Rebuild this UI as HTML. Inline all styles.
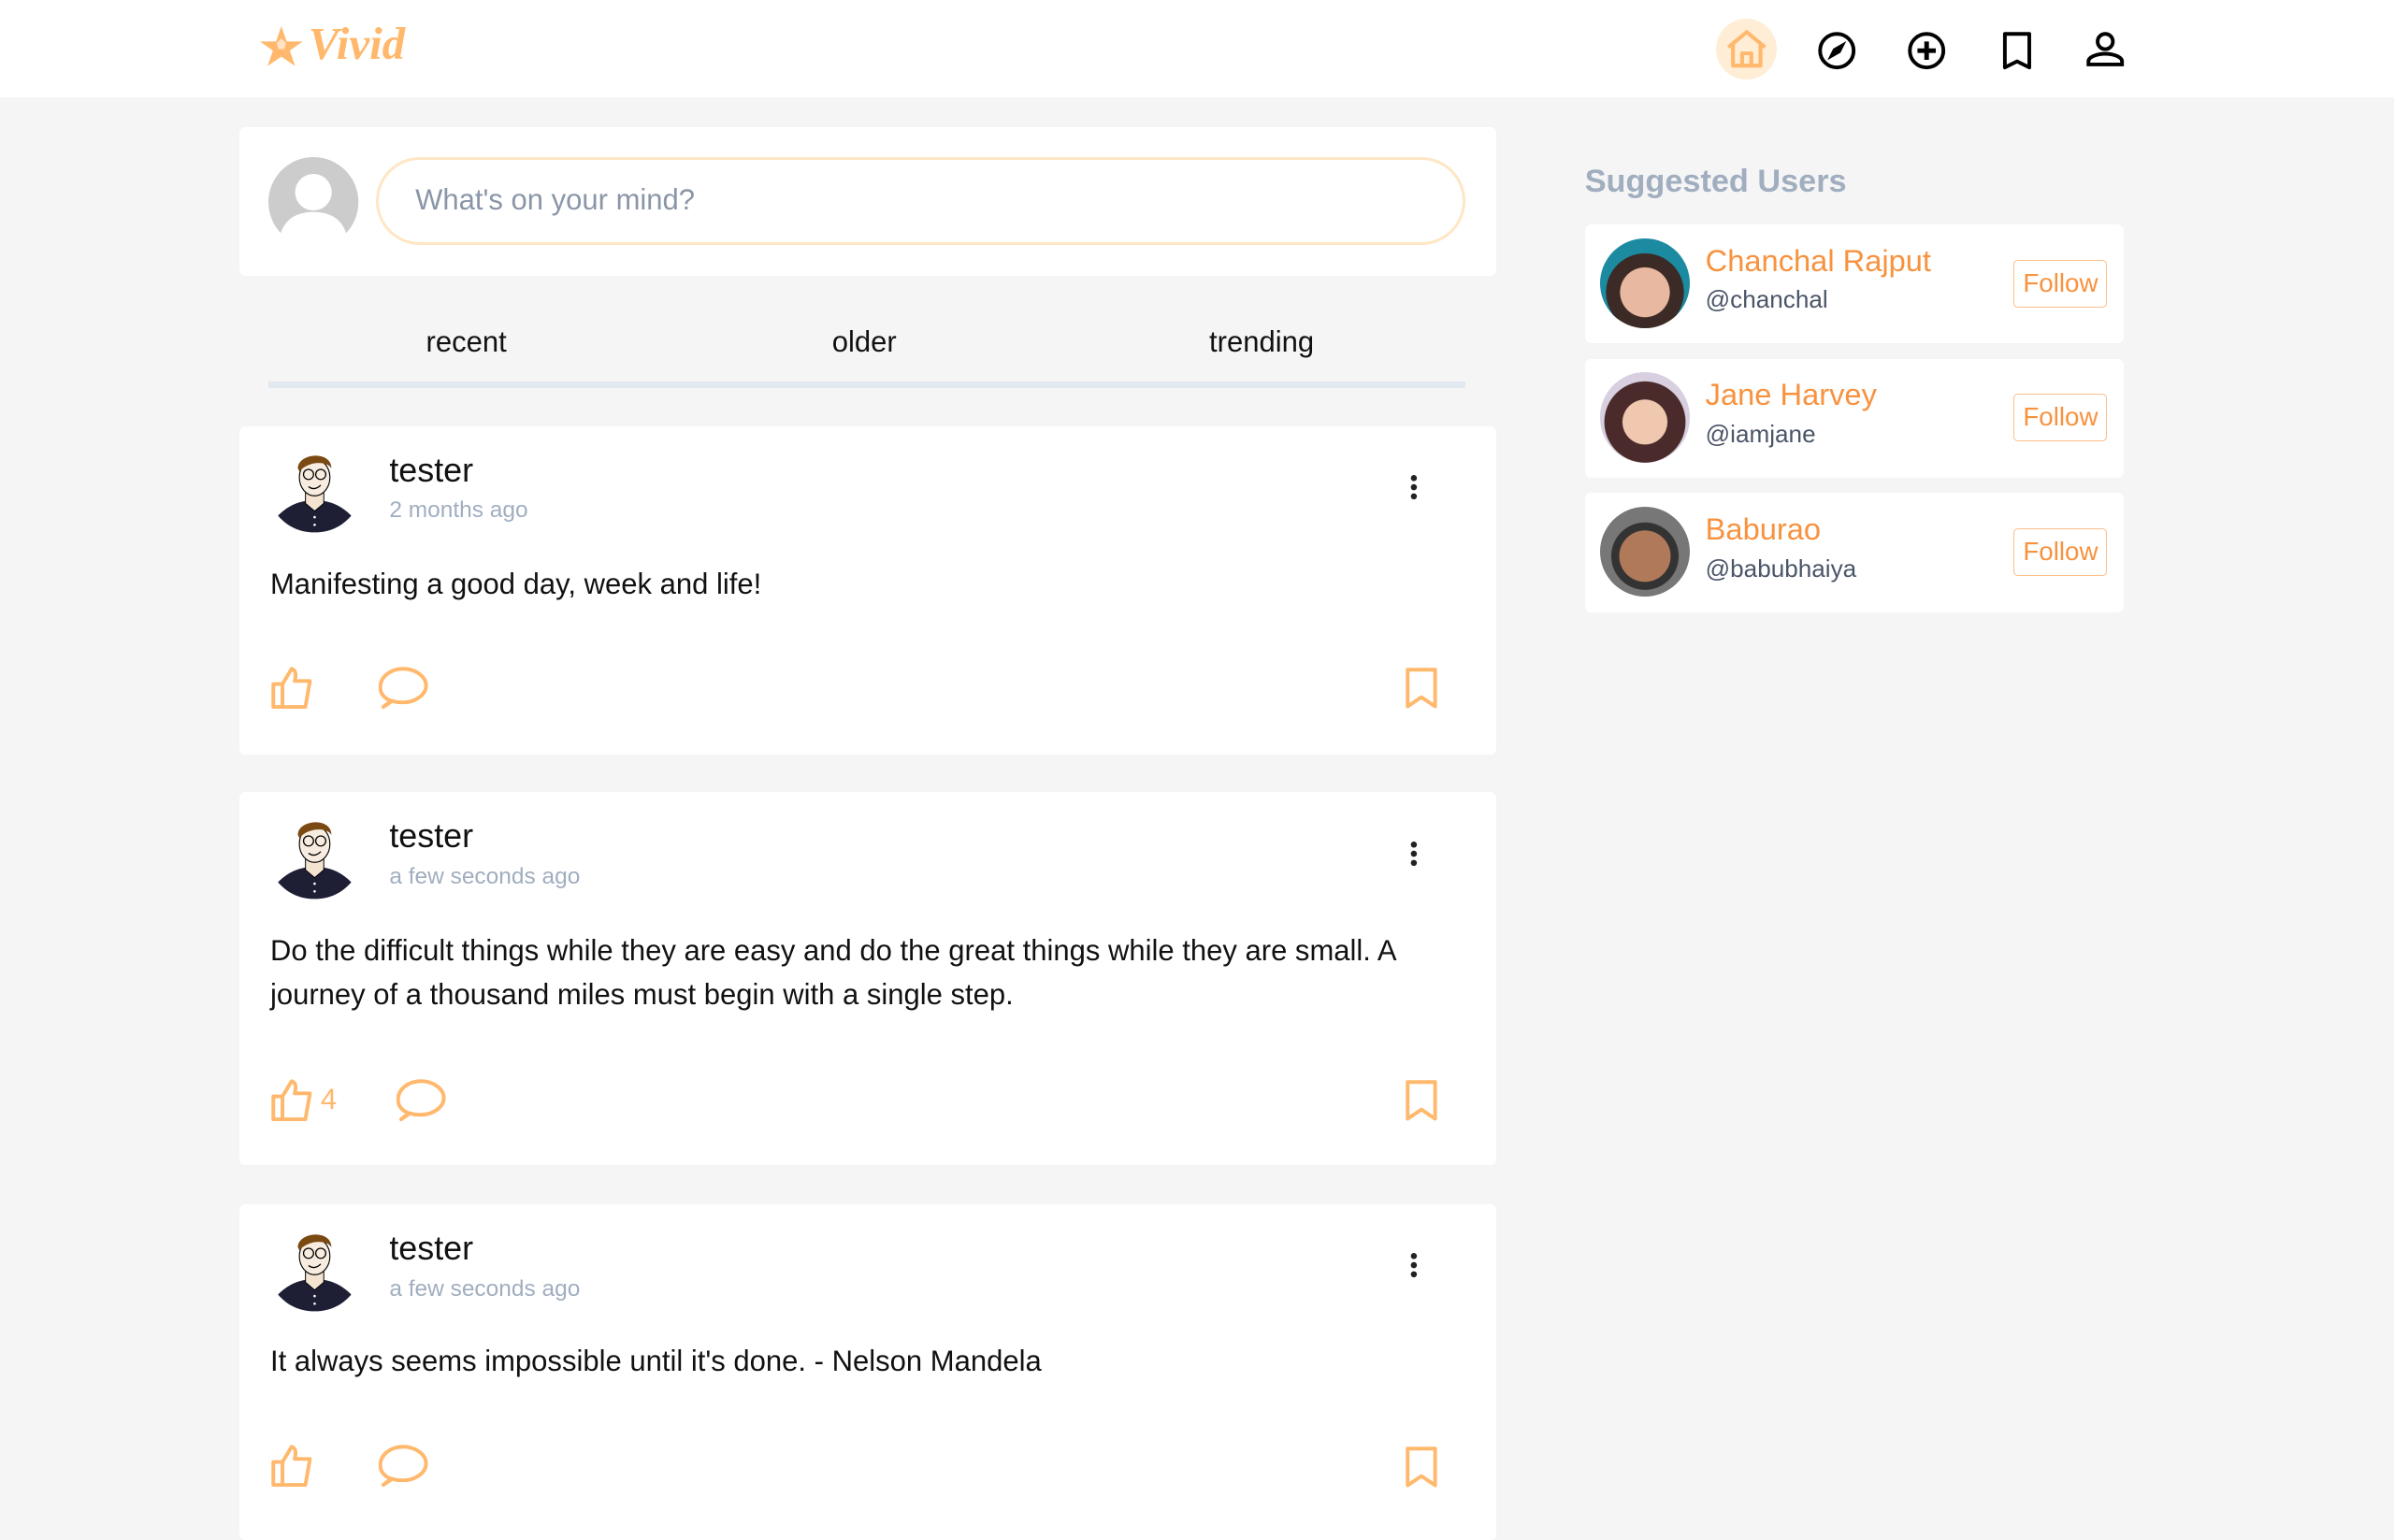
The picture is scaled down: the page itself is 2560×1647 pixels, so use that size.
<!DOCTYPE html>
<html><head><meta charset="utf-8"><style>
html,body{margin:0;padding:0;}
body{width:1568px;height:980px;zoom:1.63265;background:#f5f5f5;font-family:"Liberation Sans",sans-serif;position:relative;overflow:hidden;color:#111;}
.abs{position:absolute;}
.hdr{left:0;top:0;width:1568px;height:64px;background:#fff;}
.card{background:#fff;border-radius:4px;}
.name{font-size:22px;}
.time{font-size:15px;color:#a0aec0;}
.txt{font-size:19px;line-height:29px;}
.sug{left:1038px;width:353px;height:78px;background:#fff;border-radius:4px;}
.sug .av{position:absolute;left:10px;top:9px;width:59px;height:59px;border-radius:50%;}
.sug .n{position:absolute;left:79px;top:12px;font-size:20px;color:#f7923f;}
.sug .h{position:absolute;left:79px;top:40px;font-size:16px;color:#4a5568;}
.sug .f{position:absolute;left:281px;top:23px;width:60px;height:30px;border:1px solid #fbbf8a;border-radius:3px;color:#f7923f;font-size:17px;text-align:center;line-height:30px;}
</style></head><body>
<div class="abs hdr"></div>
<svg class="abs" style="left:170px;top:17px" width="28" height="27" viewBox="0 0 28 27"><polygon points="14,0 17.5,10 28,10 19.5,16 23,26 14,20 5,26 8.5,16 0,10 10.5,10" fill="#ffb86c"/><polygon points="14,8 17,11 16,15 12,15 11,11" fill="#fff" opacity=".6"/></svg>
<div class="abs" style="left:202px;top:11px;font-family:'Liberation Serif',serif;font-style:italic;font-weight:bold;font-size:30px;color:#ffb86c;">Vivid</div>
<div class="abs" style="left:1124px;top:12px;width:40px;height:40px;border-radius:50%;background:#ffedd5"></div>
<svg class="abs" style="left:1130px;top:19px" width="28" height="26" viewBox="0 0 28 26" fill="none" stroke="#ffb86c" stroke-width="2.5" stroke-linejoin="round"><path d="M2 12 L14 2 L26 12"/><path d="M5 10 V24 H23 V10"/><path d="M11 24 V16 H17 V24"/></svg>
<svg class="abs" style="left:1190px;top:20px" width="26" height="26" viewBox="0 0 26 26" fill="none" stroke="#000" stroke-width="2.4"><circle cx="13" cy="13" r="11"/><path d="M18 8 L11 12 L8 18 L15 14 Z" fill="#000" stroke-width="1"/></svg>
<svg class="abs" style="left:1249px;top:20px" width="26" height="26" viewBox="0 0 26 26" fill="none" stroke="#000" stroke-width="2.4"><circle cx="13" cy="13" r="11"/><path d="M13 7V19M7 13H19" stroke-width="3"/></svg>
<svg class="abs" style="left:1310px;top:20px" width="22" height="26" viewBox="0 0 22 26" fill="none" stroke="#000" stroke-width="2.4" stroke-linejoin="round"><path d="M3 2H19V24L11 20L3 24Z"/></svg>
<svg class="abs" style="left:1366px;top:20px" width="26" height="24" viewBox="0 0 26 24" fill="none" stroke="#000" stroke-width="2.4"><circle cx="13" cy="7" r="5"/><path d="M2 22V20C2 17 8 15 13 15S24 17 24 20V22Z"/></svg>

<div class="abs card" style="left:157px;top:83px;width:823px;height:98px"></div>
<svg class="abs" style="left:176px;top:103px" width="59" height="59" viewBox="0 0 59 59"><circle cx="29.5" cy="29.5" r="29.5" fill="#ccc"/><circle cx="29.5" cy="23" r="12" fill="#fff"/><path d="M8 50C12 38 22 36 29.5 36S47 38 51 50A29.5 29.5 0 0 1 8 50Z" fill="#fff"/></svg>
<div class="abs" style="left:246px;top:103px;width:710px;height:54px;border:2px solid #ffe6c4;border-radius:30px;"></div>
<div class="abs" style="left:272px;top:120px;font-size:19px;color:#8a96a8">What's on your mind?</div>
<div class="abs" style="left:279px;top:213px;font-size:19px">recent</div>
<div class="abs" style="left:545px;top:213px;font-size:19px">older</div>
<div class="abs" style="left:792px;top:213px;font-size:19px">trending</div>
<div class="abs" style="left:176px;top:250px;width:784px;height:4px;background:#e2e8f0"></div>

<div class="abs card" style="left:157px;top:279px;width:823px;height:215px"></div>
<div class="abs card" style="left:157px;top:519px;width:823px;height:244px"></div>
<div class="abs card" style="left:157px;top:789px;width:823px;height:220px"></div>

<svg width="0" height="0" style="position:absolute"><defs>
<g id="av"><path d="M2 45C10 37 18 35 26 35S42 37 50 45C44 52 36 56 26 56S8 52 2 45Z" fill="#1e1f35"/><path d="M20 30V37L26 42L32 37V30Z" fill="#f3e3d0" stroke="#000" stroke-width=".6"/><ellipse cx="26" cy="20" rx="10" ry="12" fill="#f7ecdf" stroke="#000" stroke-width=".7"/><path d="M15 14C15 4 37 2 37 14C34 9 22 9 16 16Z" fill="#7a4a12"/><circle cx="22" cy="18" r="3.3" fill="none" stroke="#000" stroke-width=".8"/><circle cx="30" cy="18" r="3.3" fill="none" stroke="#000" stroke-width=".8"/><path d="M22 26Q26 29 30 25" stroke="#000" fill="none" stroke-width=".8"/><circle cx="26" cy="46" r=".8" fill="#fff"/><circle cx="26" cy="51" r=".8" fill="#fff"/></g>
<g id="like" fill="none" stroke="#ffb86c" stroke-width="2.4" stroke-linejoin="round"><path d="M2 12H8V27H2Z"/><path d="M8 12L14 2C17 3 17 6 16 10H26L23 27H8"/></g>
<g id="cm" fill="none" stroke="#ffb86c" stroke-width="2.4" stroke-linejoin="round"><path d="M8 23C3 21 1 18 1 14C1 7 8 2 16 2S31 7 31 13S24 24 16 24C13 24 11 24 9 23L3 27Z"/></g>
<g id="bm" fill="none" stroke="#ffb86c" stroke-width="2.4" stroke-linejoin="round"><path d="M2 2H20V26L11 20L2 26Z"/></g>
<g id="dots" fill="#222"><circle cx="3" cy="2" r="2"/><circle cx="3" cy="8" r="2"/><circle cx="3" cy="14" r="2"/></g>
</defs></svg>

<svg class="abs" style="left:180px;top:293px" width="52" height="57"><use href="#av"/></svg>
<div class="abs name" style="left:255px;top:295px">tester</div>
<div class="abs time" style="left:255px;top:326px">2 months ago</div>
<svg class="abs" style="left:923px;top:311px" width="6" height="16"><use href="#dots"/></svg>
<div class="abs txt" style="left:177px;top:368px">Manifesting a good day, week and life!</div>
<svg class="abs" style="left:177px;top:436px" width="30" height="30"><use href="#like"/></svg>
<svg class="abs" style="left:248px;top:436px" width="33" height="30"><use href="#cm"/></svg>
<svg class="abs" style="left:920px;top:437px" width="22" height="28"><use href="#bm"/></svg>

<svg class="abs" style="left:180px;top:533px" width="52" height="57"><use href="#av"/></svg>
<div class="abs name" style="left:255px;top:535px">tester</div>
<div class="abs time" style="left:255px;top:566px">a few seconds ago</div>
<svg class="abs" style="left:923px;top:551px" width="6" height="16"><use href="#dots"/></svg>
<div class="abs txt" style="left:177px;top:608px;width:790px">Do the difficult things while they are easy and do the great things while they are small. A journey of a thousand miles must begin with a single step.</div>
<svg class="abs" style="left:177px;top:706px" width="30" height="30"><use href="#like"/></svg>
<div class="abs" style="left:210px;top:709px;font-size:19px;color:#ffb86c">4</div>
<svg class="abs" style="left:260px;top:706px" width="33" height="30"><use href="#cm"/></svg>
<svg class="abs" style="left:920px;top:707px" width="22" height="28"><use href="#bm"/></svg>

<svg class="abs" style="left:180px;top:803px" width="52" height="57"><use href="#av"/></svg>
<div class="abs name" style="left:255px;top:805px">tester</div>
<div class="abs time" style="left:255px;top:836px">a few seconds ago</div>
<svg class="abs" style="left:923px;top:821px" width="6" height="16"><use href="#dots"/></svg>
<div class="abs txt" style="left:177px;top:877px">It always seems impossible until it's done. - Nelson Mandela</div>
<svg class="abs" style="left:177px;top:946px" width="30" height="30"><use href="#like"/></svg>
<svg class="abs" style="left:248px;top:946px" width="33" height="30"><use href="#cm"/></svg>
<svg class="abs" style="left:920px;top:947px" width="22" height="28"><use href="#bm"/></svg>

<div class="abs" style="left:1038px;top:107px;font-size:21px;font-weight:bold;color:#a0aec0">Suggested Users</div>
<div class="abs sug" style="top:147px"><div class="av" style="background:radial-gradient(circle at 50% 60%,#e8b9a0 0 35%,#3b2a25 36% 55%,#1c8aa0 56%)"></div><div class="n">Chanchal Rajput</div><div class="h">@chanchal</div><div class="f">Follow</div></div>
<div class="abs sug" style="top:235px"><div class="av" style="background:radial-gradient(circle at 50% 55%,#f0c8b0 0 33%,#4a2a2a 34% 60%,#d8d0e0 61%)"></div><div class="n">Jane Harvey</div><div class="h">@iamjane</div><div class="f">Follow</div></div>
<div class="abs sug" style="top:323px"><div class="av" style="background:radial-gradient(circle at 50% 55%,#b07a5a 0 38%,#333 39% 50%,#777 51%)"></div><div class="n">Baburao</div><div class="h">@babubhaiya</div><div class="f">Follow</div></div>
</body></html>
